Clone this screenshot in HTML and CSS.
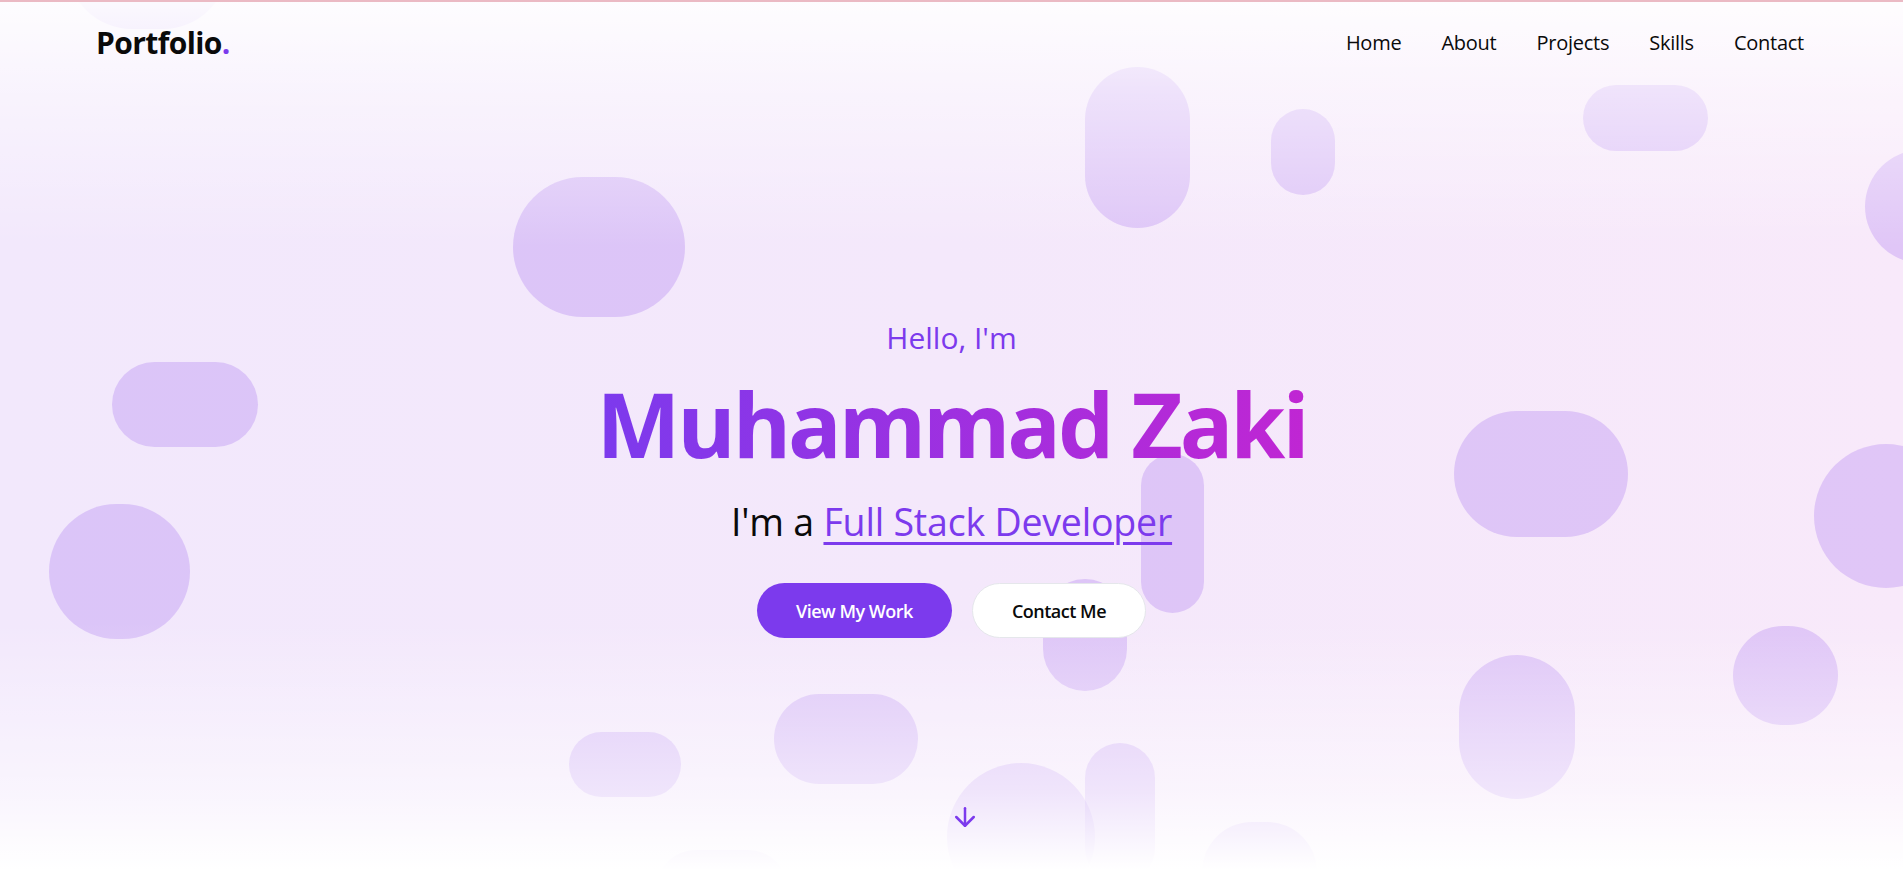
FILE: index.html
```html
<!DOCTYPE html>
<html lang="en">
<head>
<meta charset="utf-8">
<title>Portfolio</title>
<link rel="stylesheet" href="styles.css">
</head>
<body>
<section class="hero">
  <div class="shapes" aria-hidden="true">
    <span class="shape s1"></span><span class="shape s2"></span><span class="shape s3"></span><span class="shape s4"></span>
    <span class="shape s5"></span><span class="shape s6"></span><span class="shape s7"></span><span class="shape s8"></span>
    <span class="shape s9"></span><span class="shape s10"></span><span class="shape s11"></span><span class="shape s12"></span>
    <span class="shape s13"></span><span class="shape s14"></span><span class="shape s15"></span><span class="shape s16"></span>
    <span class="shape s17"></span><span class="shape s18"></span><span class="shape s19"></span><span class="shape s20"></span>
  </div>
  <div class="fade"></div>

  <header class="nav">
    <a class="logo" href="#">Portfolio<span class="dot">.</span></a>
    <nav class="links">
      <a href="#">Home</a>
      <a href="#">About</a>
      <a href="#">Projects</a>
      <a href="#">Skills</a>
      <a href="#">Contact</a>
    </nav>
  </header>

  <main class="intro">
    <p class="hello">Hello, I'm</p>
    <h1 class="name">Muhammad Zaki</h1>
    <p class="role">I'm a <a class="role-link" href="#">Full Stack Developer</a></p>
    <div class="actions">
      <a class="btn btn-primary" href="#">View My Work</a>
      <a class="btn btn-outline" href="#">Contact Me</a>
    </div>
  </main>

  <a class="scroll" href="#" aria-label="Scroll down">
    <svg width="30" height="30" viewBox="0 0 24 24" fill="none" stroke="currentColor" stroke-width="2" stroke-linecap="round" stroke-linejoin="round"><path d="M12 5v14"/><path d="m19 12-7 7-7-7"/></svg>
  </a>
</section>
</body>
</html>
```

FILE: styles.css
```css
* { box-sizing: border-box; }
html, body { margin: 0; padding: 0; }
body {
  font-family: "Open Sans", "Noto Sans", sans-serif;
  color: #0a0a0a;
  background: #fff;
  overflow: hidden;
}
a { text-decoration: none; color: inherit; }

.hero {
  position: relative;
  height: 870px;
  overflow: hidden;
  border-top: 2px solid #ebbac4;
  background: linear-gradient(to right, #f2e8fc 0%, #f4e8fb 50%, #f8e9fa 100%);
  display: flex;
  flex-direction: column;
}

.shapes { position: absolute; inset: 0; }
.shape {
  position: absolute;
  border-radius: 9999px;
  background: rgba(132, 58, 236, 0.2);
}
.s1  { left: 67px;   top: -103px; width: 161px; height: 130px; }
.s2  { left: 1085px; top: 65px;   width: 105px; height: 161px; }
.s3  { left: 1271px; top: 107px;  width: 64px;  height: 86px; }
.s4  { left: 1583px; top: 83px;   width: 125px; height: 66px; }
.s5  { left: 1865px; top: 148px;  width: 120px; height: 113px; }
.s6  { left: 513px;  top: 175px;  width: 172px; height: 140px; }
.s7  { left: 112px;  top: 360px;  width: 146px; height: 85px; }
.s8  { left: 49px;   top: 502px;  width: 141px; height: 135px; }
.s9  { left: 1454px; top: 409px;  width: 174px; height: 126px; }
.s10 { left: 1814px; top: 442px;  width: 144px; height: 144px; }
.s11 { left: 1141px; top: 452px;  width: 63px;  height: 159px; }
.s12 { left: 1043px; top: 577px;  width: 84px;  height: 112px; }
.s13 { left: 1459px; top: 653px;  width: 116px; height: 144px; }
.s14 { left: 1733px; top: 624px;  width: 105px; height: 99px; }
.s15 { left: 774px;  top: 692px;  width: 144px; height: 90px; }
.s16 { left: 947px;  top: 761px;  width: 148px; height: 148px; }
.s17 { left: 1085px; top: 741px;  width: 70px;  height: 140px; }
.s18 { left: 1202px; top: 820px;  width: 115px; height: 100px; }
.s19 { left: 656px;  top: 848px;  width: 132px; height: 80px; }
.s20 { left: 569px;  top: 730px;  width: 112px; height: 65px; }

.fade {
  position: absolute;
  inset: 0;
  background: linear-gradient(to bottom,
    rgba(255,255,255,0.9) 0px,
    rgba(255,255,255,0.5) 90px,
    rgba(255,255,255,0) 245px,
    rgba(255,255,255,0) 620px,
    rgba(255,255,255,0.55) 790px,
    rgba(255,255,255,1) 868px);
}

.nav {
  position: relative;
  z-index: 2;
  display: flex;
  align-items: center;
  justify-content: space-between;
  padding: 8px 99px 0 96px;
  height: 72px;
}
.logo {
  font-size: 30px;
  font-weight: 700;
  letter-spacing: -0.6px;
  color: #0a0a0a;
}
.dot { color: #7c3aed; }
.links {
  display: flex;
  gap: 40px;
}
.links a {
  font-size: 20px;
  font-weight: 500;
  letter-spacing: -0.25px;
  color: #0a0a0a;
}

.intro {
  position: relative;
  z-index: 2;
  display: flex;
  flex-direction: column;
  align-items: center;
  text-align: center;
  padding-top: 244px;
}
.hello {
  margin: 0;
  font-size: 30px;
  line-height: 40px;
  color: #7c3aed;
}
.name {
  margin: 16px 0 0;
  font-size: 89px;
  line-height: 100px;
  font-weight: 700;
  letter-spacing: -3.1px;
  background: linear-gradient(to right, #7c3aed, #c026d3);
  -webkit-background-clip: text;
  background-clip: text;
  color: transparent;
}
.role {
  margin: 25px 0 0;
  font-size: 37.5px;
  line-height: 45px;
  letter-spacing: -0.2px;
  color: #0a0a0a;
}
.role-link {
  color: #7c3aed;
  text-decoration: underline;
  text-decoration-thickness: 3px;
  text-underline-offset: 6px;
}
.actions {
  display: flex;
  gap: 20px;
  margin-top: 39px;
}
.btn {
  display: inline-flex;
  align-items: center;
  justify-content: center;
  height: 55px;
  padding: 0 39px;
  border-radius: 9999px;
  font-size: 18px;
  font-weight: 600;
  letter-spacing: -0.5px;
}
.btn-primary {
  background: #7c3aed;
  color: #fff;
}
.btn-outline {
  background: #fff;
  color: #0a0a0a;
  border: 1px solid #e5e7eb;
}

.scroll {
  position: absolute;
  z-index: 2;
  left: 950px;
  bottom: 38px;
  color: #7c3aed;
  display: block;
  width: 30px;
  height: 30px;
}
.scroll svg { display: block; }
```
